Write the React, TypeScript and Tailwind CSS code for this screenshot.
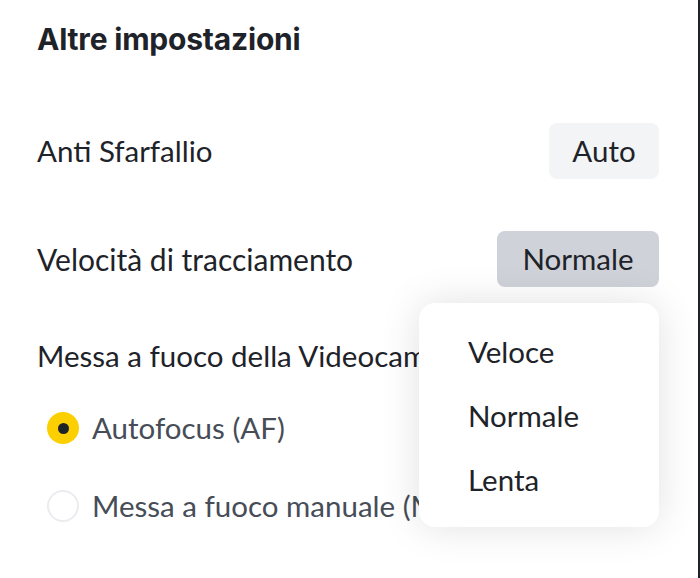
import React from "react";

const body = { fontFamily: "Lato, 'Noto Sans', sans-serif" };

function Radio({ checked, label }: { checked: boolean; label: string }) {
  return (
    <div className="flex items-center h-[32px] pl-[10px] gap-[13px]">
      {checked ? (
        <span className="w-[32px] h-[32px] rounded-full bg-[#fcd000] flex items-center justify-center shrink-0">
          <span className="w-[11px] h-[11px] rounded-full bg-[#1e2329]" />
        </span>
      ) : (
        <span className="w-[32px] h-[32px] rounded-full border-2 border-[#eaecef] bg-white shrink-0" />
      )}
      <span className="text-[29.5px] leading-[36px] text-[#474d57] whitespace-nowrap">{label}</span>
    </div>
  );
}

export default function App() {
  return (
    <div
      className="relative w-[700px] h-[578px] overflow-hidden bg-white border-r-2 border-[#1e2329] pl-[37px] pr-[39px] pt-[20px] text-[#1e2329]"
      style={body}
    >
      <h2
        className="text-[30px] leading-[38px] font-bold tracking-[-0.2px] text-[#1e2329]"
        style={{ fontFamily: "Inter, sans-serif" }}
      >
        Altre impostazioni
      </h2>

      <div className="mt-[65px] flex items-center justify-between h-[56px]">
        <span className="text-[29.5px] leading-[36px]">Anti Sfarfallio</span>
        <button className="h-[56px] w-[110px] rounded-[8px] bg-[#f3f4f6] text-[29.5px] leading-[36px] text-[#1e2329]">
          Auto
        </button>
      </div>

      <div className="mt-[52px] flex items-center justify-between h-[56px]">
        <span className="text-[30px] leading-[36px]">Velocità di tracciamento</span>
        <div className="relative">
          <button className="h-[56px] w-[162px] rounded-[8px] bg-[#cfd2d8] text-[29.5px] leading-[36px] text-[#1e2329]">
            Normale
          </button>
          <div className="absolute right-0 top-full mt-[16px] z-10 w-[240px] h-[224px] rounded-[16px] bg-white shadow-[0_0_40px_rgba(0,0,0,0.12)] pt-[17px] pl-[49px]">
            {["Veloce", "Normale", "Lenta"].map((t) => (
              <div key={t} className="h-[64px] flex items-center text-[29.5px] leading-[36px] text-[#1e2329]">
                {t}
              </div>
            ))}
          </div>
        </div>
      </div>

      <div className="mt-[51px] text-[29.5px] leading-[36px] whitespace-nowrap">
        Messa a fuoco della Videocamera
      </div>

      <div className="mt-[38px]">
        <Radio checked label="Autofocus (AF)" />
      </div>
      <div className="mt-[46px]">
        <Radio checked={false} label="Messa a fuoco manuale (MF)" />
      </div>
    </div>
  );
}
